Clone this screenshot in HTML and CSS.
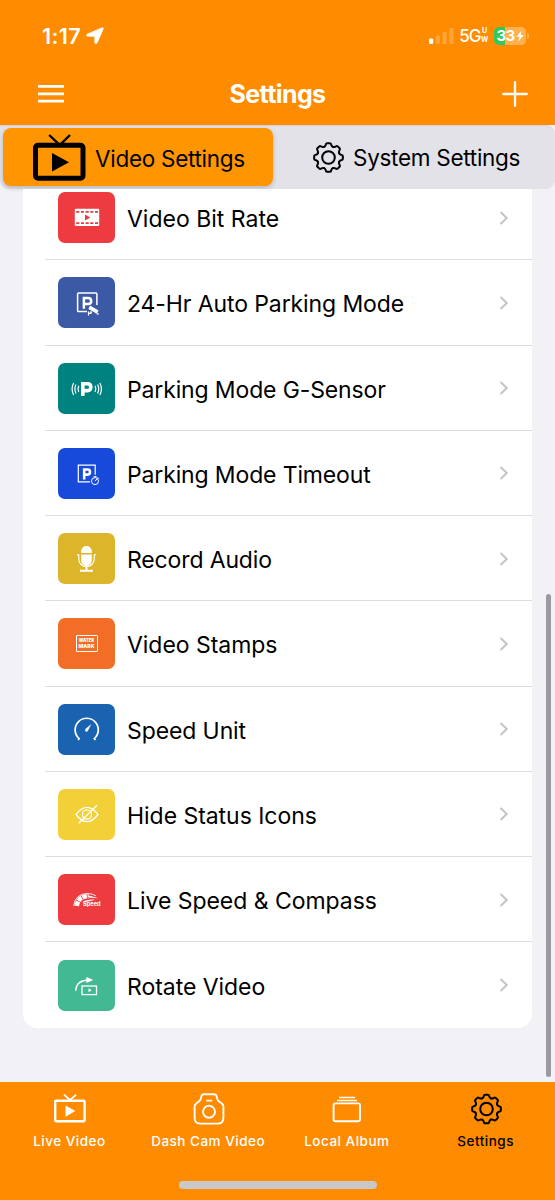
FILE: index.html
```html
<!DOCTYPE html>
<html lang="en">
<head>
<meta charset="utf-8">
<title>Settings</title>
<link rel="stylesheet" href="styles.css">
</head>
<body>
<svg class="defs" width="0" height="0" aria-hidden="true">
  <defs>
    <path id="tooth" d="M-4.55-11Q-3.3-11.5-2.9-12.9L-2.7-13.6Q-2.4-14.8-1.4-14.8H1.4Q2.4-14.8 2.7-13.6L2.9-12.9Q3.3-11.5 4.55-11"/>
    <symbol id="gear" viewBox="-16 -16 32 32">
      <g fill="none" stroke="currentColor" stroke-width="2.1" stroke-linecap="round">
        <circle r="6.5"/>
        <use href="#tooth"/><use href="#tooth" transform="rotate(45)"/><use href="#tooth" transform="rotate(90)"/><use href="#tooth" transform="rotate(135)"/>
        <use href="#tooth" transform="rotate(180)"/><use href="#tooth" transform="rotate(225)"/><use href="#tooth" transform="rotate(270)"/><use href="#tooth" transform="rotate(315)"/>
      </g>
    </symbol>
    <symbol id="chevron" viewBox="0 0 10 16"><path d="M1.5 2L7.7 8 1.5 14" fill="none" stroke="#c4c4c7" stroke-width="2"/></symbol>
  </defs>
</svg>
<div class="phone">
  <header class="header">
    <div class="status">
      <span class="time">1:17</span>
      <svg class="location" width="18" height="18" viewBox="0 0 18 18"><path d="M15.8.9Q17.6.2 17.1 2L11 16Q9.9 17.6 8.8 16V9.3H2Q-.2 8.6 1.2 7.2Z" fill="#fff" stroke="#fff" stroke-width=".8" stroke-linejoin="round"/></svg>
      <svg class="signal" width="25" height="16" viewBox="0 0 25 16"><g fill="#fff"><rect y="10.4" width="4.2" height="5.6" rx="1.3"/><g opacity=".22"><rect x="6.8" y="7.5" width="4.2" height="8.5" rx="1.3"/><rect x="13.5" y="4" width="4.2" height="12" rx="1.3"/><rect x="20.3" y="0" width="4.2" height="16" rx="1.3"/></g></g></svg>
      <span class="network">5G</span>
      <span class="uw"><span>U</span><span>W</span></span>
      <span class="battery"><span class="level">33</span><svg width="8" height="12" viewBox="0 0 8 12"><path d="M5.6.4L.4 6.7H3.4L2.2 11.7 7.7 5H4.5Z" fill="#fff"/></svg></span>
      <span class="battery-cap"></span>
    </div>
    <div class="navbar">
      <svg class="menu" width="26" height="18" viewBox="0 0 26 18"><path d="M0 1.4H26M0 8.8H26M0 16.2H26" stroke="#fff" stroke-width="2.7"/></svg>
      <h1 class="title">Settings</h1>
      <svg class="add" width="26" height="26" viewBox="0 0 26 26"><path d="M13 1.2V24.8M1.2 13H24.8" stroke="#fff" stroke-width="2.3" stroke-linecap="round"/></svg>
    </div>
  </header>
  <div class="segmented">
    <div class="segment segment-active">
      <svg width="53" height="48" viewBox="0 0 53 48"><rect x="2.5" y="12.3" width="47.5" height="33" rx="2.5" fill="none" stroke="#000" stroke-width="5"/><path d="M16.2 2L26.8 12 37 2" fill="none" stroke="#000" stroke-width="2.4"/><path d="M19 20V38.5L36 29.2Z"/></svg>
      <span>Video Settings</span>
    </div>
    <div class="segment segment-system">
      <svg width="31" height="31"><use href="#gear"/></svg>
      <span>System Settings</span>
    </div>
  </div>
  <main class="content">
    <div class="card">
      <div class="row"><span class="tile red"><svg width="57" height="51" viewBox="0 0 57 51"><rect x="16.8" y="16.8" width="24.4" height="17.3" rx="1" fill="#fff"/><path d="M18.2 19.8H40M18.2 31.2H40" stroke="#ee3b40" stroke-width="1.8" stroke-dasharray="3.1 1.6"/><path d="M27 22.4V28.6L32.3 25.5Z" fill="#ee3b40"/></svg></span><span class="label open">Video Bit Rate</span><svg class="chevron"><use href="#chevron"/></svg></div>
      <div class="row"><span class="tile indigo"><svg width="57" height="51" viewBox="0 0 57 51"><path d="M29 34.6H20.5Q19.6 34.6 19.6 33.7V17Q19.6 16.1 20.5 16.1H38Q38.9 16.1 38.9 17V28" fill="none" stroke="#fff" stroke-width="1.5"/><path d="M25.9 31.8V20.9H30Q33.2 20.9 33.2 24T30 27.1H26" fill="none" stroke="#fff" stroke-width="2.5"/><path d="M32 28.4L40.6 33.4 38.8 36.7 30.4 32ZM37.4 36.3L40.2 37.9 41 36.3M34.2 34.8L33.3 37.1H31V35.7H32.1L32.6 34ZM29.9 34.4H31.1V38.4H29.9Z" fill="#fff"/></svg></span><span class="label">24-Hr Auto Parking Mode</span><svg class="chevron"><use href="#chevron"/></svg></div>
      <div class="row"><span class="tile teal"><svg width="57" height="51" viewBox="0 0 57 51"><path d="M24.8 33V20.8H29.5Q32.8 20.8 32.8 24.2T29.5 27.6H25" fill="none" stroke="#fff" stroke-width="3.6"/><path d="M20.8 22.9Q19.2 25.9 20.8 28.9M18 21.4Q15.8 25.9 18 30.4M15.6 19.9Q12.6 25.9 15.6 31.9M37 22.9Q38.6 25.9 37 28.9M39.6 21.4Q41.8 25.9 39.6 30.4M41.9 19.9Q44.9 25.9 41.9 31.9" fill="none" stroke="#fff" stroke-width="1.2"/></svg></span><span class="label snug">Parking Mode G-Sensor</span><svg class="chevron"><use href="#chevron"/></svg></div>
      <div class="row"><span class="tile blue"><svg width="57" height="51" viewBox="0 0 57 51"><path d="M32 33.8H20.3V17.2H37.2V26.7" fill="none" stroke="#fff" stroke-width="1.2"/><path d="M26.2 31.4V21.5H29.8Q32 21.5 32 24T29.8 26.6H26.4" fill="none" stroke="#fff" stroke-width="2.6"/><g fill="none" stroke="#fff" stroke-width="1"><circle cx="37" cy="33.1" r="3.5"/><path d="M35.6 28.6H38.5M37 33.2L39 31M39.5 29.3L40.8 30.6"/></g></svg></span><span class="label snug">Parking Mode Timeout</span><svg class="chevron"><use href="#chevron"/></svg></div>
      <div class="row"><span class="tile gold"><svg width="57" height="51" viewBox="0 0 57 51"><path d="M23.2 20V18A5.3 5.1 0 0 1 33.8 18V20ZM23.2 21.6H33.8V27.6A5.3 5.3 0 0 1 23.2 27.6ZM27.5 32.5H29.5V36.8H27.5ZM22 36.7H35V38.8H22Z" fill="#fff"/><path d="M19.2 21.7H21M36 21.7H37.9M20.8 21.7V26.3A7.7 7.4 0 0 0 36.2 26.3V21.7" fill="none" stroke="#fff" stroke-width="1.2"/></svg></span><span class="label snug">Record Audio</span><svg class="chevron"><use href="#chevron"/></svg></div>
      <div class="row"><span class="tile orange"><span class="stamp"><span class="stamp-small">WATER</span><span>MARK</span></span></span><span class="label loose">Video Stamps</span><svg class="chevron"><use href="#chevron"/></svg></div>
      <div class="row"><span class="tile navy"><svg width="57" height="51" viewBox="0 0 57 51"><path d="M20.2 36L21.1 34.6A11.6 11.6 0 1 1 36.3 34.6L37.4 36" fill="none" stroke="#fff" stroke-width="1.7"/><path d="M33.3 20L29.8 27.1Q28 28.6 27.1 26.5Q26.8 25.7 27.7 24.7Z" fill="#fff"/></svg></span><span class="label">Speed Unit</span><svg class="chevron"><use href="#chevron"/></svg></div>
      <div class="row"><span class="tile yellow"><svg width="57" height="51" viewBox="0 0 57 51"><g fill="none" stroke="#fff" stroke-width="1.3"><path d="M18 25.5Q29 11.1 40 25.5Q29 39.9 18 25.5Z"/><circle cx="29" cy="25.5" r="4.6"/><path d="M20.7 34.2L39 16.2"/></g></svg></span><span class="label loose">Hide Status Icons</span><svg class="chevron"><use href="#chevron"/></svg></div>
      <div class="row"><span class="tile red"><svg width="57" height="51" viewBox="0 0 57 51"><g fill="none" stroke="#fff"><path d="M15.7 32.2Q17 19.4 30.2 19.5Q35.7 20 38 22" stroke-width=".9"/><path d="M18.8 32Q20 22.2 30.5 22.2" stroke-width="4.6" stroke-dasharray="4.6 .8"/></g><path d="M29.8 21.3L40.5 24.2 31 23.6ZM24.5 28.2Q29 24.8 37.5 25.7L30 27.6Z" fill="#fff"/></svg><span class="speed">Speed</span></span><span class="label loose">Live Speed &amp; Compass</span><svg class="chevron"><use href="#chevron"/></svg></div>
      <div class="row"><span class="tile green"><svg width="57" height="51" viewBox="0 0 57 51"><path d="M17.8 30.8Q18 21 29.5 20" fill="none" stroke="#fff" stroke-width="1.5"/><path d="M28.4 16.9L35.3 20 28.4 23ZM30.5 28.2V32.3L33.7 30.2Z" fill="#fff"/><rect x="24" y="26" width="14.5" height="8.6" fill="none" stroke="#fff" stroke-width="1.3"/></svg></span><span class="label loose">Rotate Video</span><svg class="chevron"><use href="#chevron"/></svg></div>
    </div>
    <div class="scrollbar"></div>
  </main>
  <nav class="tabs">
    <div class="tab"><svg width="32" height="32" viewBox="0 0 32 32"><rect x="1.2" y="7.8" width="29.4" height="20.4" rx="1" fill="none" stroke="#fff" stroke-width="2.4"/><path d="M10 1.6L16 7 22.2 1.6" fill="none" stroke="#fff" stroke-width="1.7"/><path d="M11.5 12.5V23.7L21.3 18.1Z" fill="#fff"/></svg><span>Live Video</span></div>
    <div class="tab"><svg width="32" height="32" viewBox="0 0 32 32"><g fill="none" stroke="#fff" stroke-width="1.9"><path d="M11 1.2H21Q23.1 1.2 23.6 3.3L24.2 5.8Q24.7 7.6 26.4 8.7L28.5 10.2Q30.4 11.5 30.4 13.5V24.7Q30.4 30.6 24.5 30.6H7.3Q1.6 30.6 1.6 24.7V13.5Q1.6 11.5 3.5 10.2L5.6 8.7Q7.3 7.6 7.8 5.8L8.4 3.3Q8.9 1.2 11 1.2Z"/><circle cx="16" cy="18.8" r="6"/><path d="M14 7.6H18.4" stroke-linecap="round"/></g></svg><span>Dash Cam Video</span></div>
    <div class="tab"><svg width="32" height="32" viewBox="0 0 32 32"><g fill="none" stroke="#fff"><rect x="2.6" y="10.4" width="26.4" height="17.8" rx="2" stroke-width="1.9"/><path d="M8 4.5H24M6 7.5H26" stroke-width="1.3"/></g></svg><span>Local Album</span></div>
    <div class="tab tab-active"><svg width="31" height="32"><use href="#gear"/></svg><span>Settings</span></div>
    <div class="home-indicator"></div>
  </nav>
</div>
</body>
</html>
```
FILE: styles.css
```css
* { box-sizing: border-box; }
body { margin: 0; font-family: Inter, "Liberation Sans", sans-serif; color: #000; background: #f2f1f6; }
svg { display: block; flex: none; }
.defs { position: absolute; }
.phone { width: 555px; height: 1200px; display: flex; flex-direction: column; overflow: hidden; }
.header { height: 125px; flex: none; background: #ff8c00; color: #fff; }
.status { height: 62px; padding: 9px 26px 0 42px; display: flex; align-items: center; }
.time { font-size: 21.5px; font-weight: 600; width: 45px; letter-spacing: .4px; }
.signal { margin-left: 325px; }
.network { font-size: 17px; font-weight: 500; margin-left: 5px; width: 22px; letter-spacing: -1px; }
.uw { display: flex; flex-direction: column; align-items: center; width: 7px; font-size: 7px; line-height: 8.5px; font-weight: 700; }
.battery { display: flex; align-items: center; justify-content: center; gap: 1px; width: 32px; height: 18px; margin-left: 6px; border-radius: 5px; flex: none; background: linear-gradient(90deg, #34c759 11px, #ffb14f 11px); }
.level { font-size: 15px; font-weight: 700; letter-spacing: -.6px; }
.battery-cap { width: 2px; height: 6px; margin-left: 1px; border-radius: 0 2px 2px 0; background: #ffb14f; flex: none; }
.navbar { height: 63px; padding: 0 27px 0 38px; display: flex; align-items: center; justify-content: space-between; }
.title { margin: 0 0 0 -11px; font-size: 25px; font-weight: 700; letter-spacing: -.6px; }
.segmented { height: 64px; flex: none; padding: 3px 3px 3px; display: flex; background: #e3e2e8; border-top: 1px solid #d1d0d6; border-radius: 0 9px 9px 9px; }
.segment { display: flex; align-items: center; font-size: 22.5px; letter-spacing: -.28px; white-space: nowrap; }
.segment-active { width: 270px; height: 58px; margin-top: -1px; padding-left: 30px; gap: 9px; border-radius: 8px; background: #ff9500; box-shadow: 0 2px 5px #0003; }
.segment-active span { padding-top: 2px; }
.segment-system { padding-left: 40px; gap: 9px; }
.content { position: relative; height: 893px; flex: none; overflow: hidden; }
.card { width: 509px; margin: -14px 0 0 23px; border-radius: 0 0 14px 14px; background: #fff; }
.row { height: 85.27px; padding: 0 23px 0 35px; display: flex; align-items: center; position: relative; }
.row + .row::before { content: ""; position: absolute; left: 22px; right: 0; top: -1px; height: 1px; background: #dedee0; }
.tile { position: relative; width: 57px; height: 51px; flex: none; border-radius: 7px; display: flex; align-items: center; justify-content: center; }
.red { background: #ee3b40; }
.indigo { background: #3c59a6; }
.teal { background: #008380; }
.blue { background: #174adb; }
.gold { background: #dcb52a; }
.orange { background: #f26e27; }
.navy { background: #1963b1; }
.yellow { background: #f3d038; }
.green { background: #42b993; }
.stamp { width: 22px; height: 17px; border: 1.3px solid #fff; border-radius: 1px; display: flex; flex-direction: column; align-items: center; justify-content: center; color: #fff; font-size: 5px; font-weight: 900; line-height: 4.5px; }
.stamp-small { font-size: 4.2px; }
.speed { position: absolute; left: 25px; top: 26px; color: #fff; font-size: 5.7px; line-height: 8px; font-weight: 700; }
.label { margin-left: 12px; padding-top: 3px; flex: 1; font-size: 23px; white-space: nowrap; letter-spacing: -.1px; }
.snug { letter-spacing: -.14px; }
.loose { letter-spacing: -.04px; }
.open { letter-spacing: 0; }
.chevron { width: 10px; height: 16px; }
.scrollbar { position: absolute; right: 4px; top: 405px; width: 5px; height: 483px; border-radius: 3px; background: #9b9a9e; }
.tabs { position: relative; height: 118px; flex: none; padding-top: 11px; display: flex; background: #ff8c00; color: #fff; }
.tab { flex: 1; display: flex; flex-direction: column; align-items: center; gap: 8px; font-size: 13.5px; font-weight: 500; letter-spacing: .5px; white-space: nowrap; }
.tab svg { margin-left: 1px; }
.tab-active { color: #000; }
.home-indicator { position: absolute; left: 179px; top: 99px; width: 198px; height: 8px; border-radius: 4px; background: #c8c8c8; }
```
